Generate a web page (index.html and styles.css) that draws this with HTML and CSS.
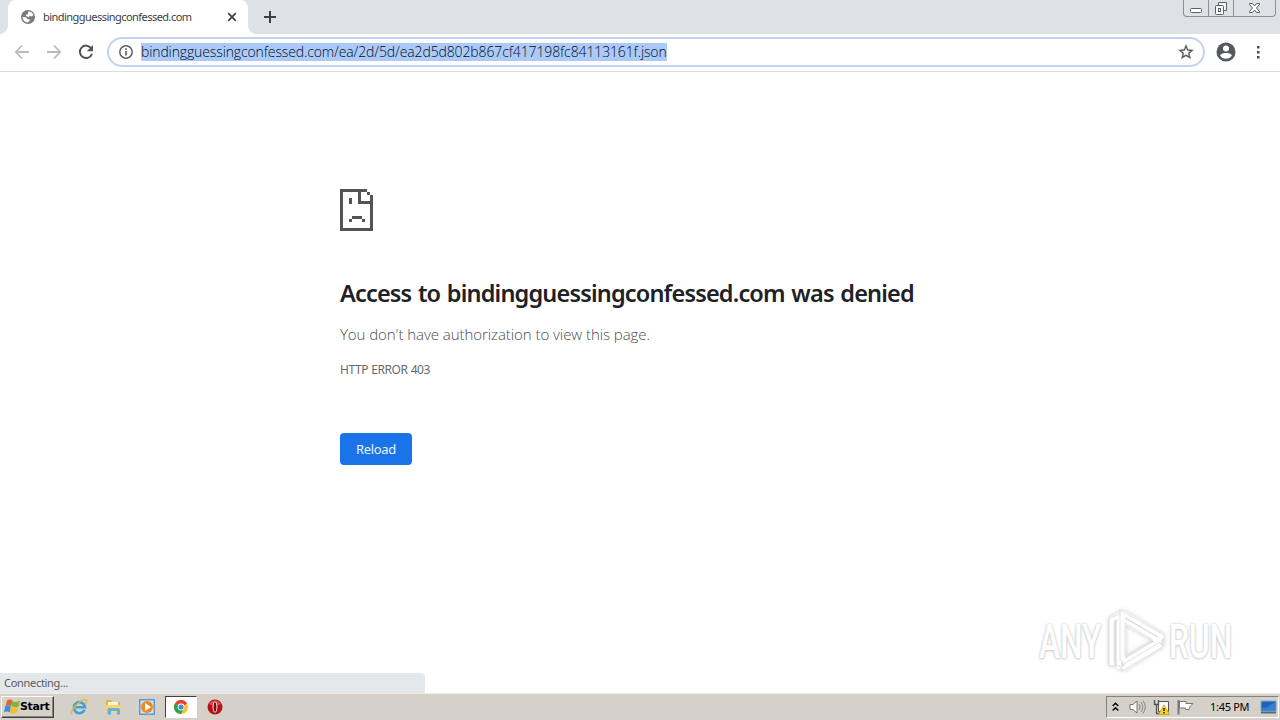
FILE: index.html
```html
<!DOCTYPE html>
<html lang="en">
<head>
    <meta charset="UTF-8">
    <meta name="viewport" content="width=device-width, initial-scale=1.0">
    <title>bindingguessingconfessed.com</title>
    <link rel="stylesheet" href="styles.css">
</head>
<body>
    <!-- Tabs and window buttons -->
    <header class="tab-strip">
        <div class="tab">
            <svg class="favicon" width="14" height="14" viewBox="0 0 14 14">
                <circle cx="7" cy="7" r="7" fill="#777a7e"/>
                <path d="M7.2 1.5 C9.5 1.2 12 3 12.4 5.3 L10.6 6.5 L8.6 5.8 L7.9 7.2 L5.4 6.2 L4.6 4.7 L6.8 4.2Z M1.5 7 L5 7.3 L6.4 9 L8.6 9.2 L8.8 10.4 L6.9 12.4 C4.2 12.5 1.5 10.2 1.5 7Z" fill="#fff"/>
            </svg>
            <span class="tab-title">bindingguessingconfessed.com</span>
            <svg class="tab-close" width="10" height="10" viewBox="0 0 10 10">
                <path d="M1.2 1.2L8.8 8.8M8.8 1.2L1.2 8.8" stroke="#3c4043" stroke-width="1.7"/>
            </svg>
        </div>
        <svg class="new-tab" width="12" height="12" viewBox="0 0 12 12">
            <path d="M6 0V12M0 6H12" stroke="#3c4043" stroke-width="2"/>
        </svg>
        <div class="window-buttons">
            <span><svg width="13" height="16" viewBox="0 0 13 16"><rect x=".5" y="8.5" width="11" height="4" rx="1" fill="#fff" stroke="#5b5f66"/></svg></span>
            <span><svg width="14" height="16" viewBox="0 0 14 16"><path d="M4.5 2.5H12.5V10.5H4.5Z" fill="#f4f5f7" stroke="#5b5f66"/><rect x="1.5" y="5.5" width="8" height="9" rx="1" fill="#fff" stroke="#5b5f66"/><rect x="4.5" y="8.5" width="2" height="3" fill="none" stroke="#5b5f66"/></svg></span>
            <span><svg width="13" height="16" viewBox="0 0 13 16"><path d="M1.5 3.500H4.500L6.500 6L8.500 3.500H11.500V4.500L8.500 8L11.500 11.500V12.500H8.500L6.500 10L4.500 12.500H1.500V11.500L4.500 8L1.500 4.500Z" fill="#fff" stroke="#5b5f66"/></svg></span>
        </div>
    </header>

    <!-- Address bar -->
    <nav class="toolbar">
        <svg class="nav-icon" width="16" height="16" viewBox="0 0 16 16">
            <path d="M15 8H2M8 1.500L1.800 8L8 14.500" fill="none" stroke="#babcbe" stroke-width="1.800"/>
        </svg>
        <svg class="nav-icon" width="16" height="16" viewBox="0 0 16 16">
            <path d="M1 8H14M8 1.500L14.200 8L8 14.500" fill="none" stroke="#babcbe" stroke-width="1.800"/>
        </svg>
        <svg class="nav-icon" width="16" height="16" viewBox="0 0 16 16">
            <path d="M13.200 4.300A6.200 6.200 0 1 0 14 9.700" fill="none" stroke="#505357" stroke-width="2"/>
            <path d="M15 1V7.200H8.800Z" fill="#505357"/>
        </svg>
        <div class="omnibox">
            <svg width="14" height="14" viewBox="0 0 14 14">
                <circle cx="7" cy="7" r="6.200" fill="none" stroke="#5f6368" stroke-width="1.500"/>
                <path d="M7 3.200V4.800M7 6.100V10.600" stroke="#5f6368" stroke-width="1.700"/>
            </svg>
            <span class="url">bindingguessingconfessed.com/ea/2d/5d/ea2d5d802b867cf417198fc84113161f.json</span>
            <svg class="star" width="18" height="18" viewBox="0 0 24 24">
                <path d="M22 9.240l-7.190-.62L12 2 9.190 8.630 2 9.240l5.460 4.730L5.820 21 12 17.270 18.180 21l-1.630-7.030L22 9.240zM12 15.400l-3.760 2.270 1-4.280-3.320-2.880 4.380-.38L12 6.100l1.710 4.040 4.380.38-3.320 2.880 1 4.280L12 15.400z" fill="#55585d" stroke="#55585d" stroke-width=".4"/>
            </svg>
        </div>
        <svg class="avatar" width="20" height="20" viewBox="0 0 20 20">
            <circle cx="10" cy="10" r="9.500" fill="#55585d"/>
            <circle cx="10" cy="6.500" r="3" fill="#fff"/>
            <path d="M4 13.500C5 11.500 8 11 10 11S15 11.500 16 13.500C14.800 15.500 12.500 16.800 10 16.800S5.200 15.500 4 13.500Z" fill="#fff"/>
        </svg>
        <svg class="menu-dots" width="4" height="14" viewBox="0 0 4 14">
            <path d="M1 1h2.500v2.500H1zM1 6h2.500v2.500H1zM1 11h2.500v2.500H1z" fill="#4a4d52"/>
        </svg>
    </nav>

    <!-- Error page -->
    <main class="page">
        <div class="error">
            <svg class="sad-page" width="33" height="42" viewBox="0 0 33 42" shape-rendering="crispEdges">
                <path d="M0 0H27V3H3V39H30V15H18V3H21V12H30V9H33V42H0ZM27 3H30V6H27ZM30 6H33V9H30ZM9 9H12V15H9ZM12 27H22V30H12ZM9 30H12V33H9ZM22 30H25V33H22Z" fill="#535353"/>
            </svg>
            <h1>Access to bindingguessingconfessed.com was denied</h1>
            <p class="message">You don't have authorization to view this page.</p>
            <p class="error-code">HTTP ERROR 403</p>
            <button>Reload</button>
        </div>
        <div class="status">Connecting...</div>
        <div class="watermark">
            <span class="any">ANY</span>
            <svg width="60" height="64" viewBox="0 0 60 64">
                <g fill="none" stroke="#fff" stroke-width="5" stroke-linejoin="round">
                    <path d="M6 56V10L13 6V60"/>
                    <path d="M17 51V4L56 27L51 31L18 12"/>
                    <path d="M17 54L55 31M17 60L55 36"/>
                </g>
                <path d="M3 57V9L14 5V1L58 26V37L16 62L13 56ZM19 14V47L47 31ZM8 54V13L12 11M14 5V52M19 9L52 28M16 56L56 32" fill="none" stroke="#e3e3e3"/>
            </svg>
            <span class="run">RUN</span>
        </div>
    </main>

    <!-- Windows taskbar -->
    <footer class="taskbar">
        <div class="start">
            <svg width="16" height="16" viewBox="0 0 16 16">
                <path d="M3 1.500Q6 -.5 8.500 1.500L7.300 7Q4 5 1.500 7Z" fill="#e8612c"/>
                <path d="M8.500 2Q12 4 16 1.500L14.500 7.500Q11 9 7.300 7Z" fill="#7bb53c"/>
                <path d="M1.300 7Q4 5.500 7 7L5.800 13.500Q3 11.500 0 13.500Z" fill="#3f8fd8"/>
                <path d="M7 7.500Q11 9.500 14.300 7.500L13 13.500Q9 15.500 5.800 13.500Z" fill="#f5bd29"/>
            </svg>
            <span>Start</span>
        </div>
        <div class="quick-launch">
            <span class="task">
                <svg width="18" height="18" viewBox="0 0 18 18">
                    <path d="M14.500 11.800A5.500 5.500 0 1 1 14.900 9.200H5.500" fill="none" stroke="#3ca2dd" stroke-width="2.600"/>
                    <path d="M2.500 15.500C-1 17.500 3 8 11 3C17 0 17.500 3 15.500 6" fill="none" stroke="#e9b92e" stroke-width="1.300"/>
                </svg>
            </span>
            <span class="task">
                <svg width="18" height="18" viewBox="0 0 18 18">
                    <path d="M2 2H7L8 4H16V13H2Z" fill="#dcb54a"/>
                    <path d="M4 4H14V8H4Z" fill="#fff8cf"/>
                    <path d="M1.500 7H16.500V14H1.500Z" fill="#f3d573"/>
                    <path d="M3.500 16.500V12Q3.500 10 5.500 10H14Q16 10 16 12V16.500H13V13H7V16.500Z" fill="#67afd9"/>
                </svg>
            </span>
            <span class="task">
                <svg width="18" height="18" viewBox="0 0 18 18">
                    <path d="M1 1H17V17H1Z" fill="#5c9bd0"/>
                    <path d="M2.500 2.500H15.500V15.500H2.500Z" fill="#cfe5f5"/>
                    <circle cx="9" cy="9" r="6" fill="#f1871e"/>
                    <path d="M7 5L13 9L7 13Z" fill="#fff"/>
                </svg>
            </span>
            <span class="task active">
                <svg width="14" height="14" viewBox="0 0 14 14">
                    <circle cx="7" cy="7" r="7" fill="#f5c32c"/>
                    <path d="M7 7L.9 3.500A7 7 0 0 1 13.100 3.500Z" fill="#df4436"/>
                    <path d="M7 7L.9 3.500A7 7 0 0 0 7 14L9.500 9Z" fill="#2ba24c"/>
                    <circle cx="7" cy="7" r="3.400" fill="#fff"/>
                    <circle cx="7" cy="7" r="2.600" fill="#4a86e0"/>
                </svg>
            </span>
            <span class="task">
                <svg width="16" height="16" viewBox="0 0 16 16">
                    <circle cx="8" cy="8" r="7.500" fill="#b51218"/>
                    <path d="M2 5A7 7 0 0 1 14 5Q8 8 2 5Z" fill="#d9494a"/>
                    <ellipse cx="8" cy="8" rx="2.400" ry="5.500" fill="#fff"/>
                    <ellipse cx="8" cy="8" rx="1.500" ry="4.800" fill="#7d0b10"/>
                </svg>
            </span>
        </div>
        <div class="tray">
            <svg class="chevrons" width="7" height="10" viewBox="0 0 7 10">
                <path d="M.7 4L3.500 1.200L6.300 4M.7 8.500L3.500 5.700L6.300 8.500" fill="none" stroke="#000" stroke-width="1.500"/>
            </svg>
            <svg class="sound" width="17" height="16" viewBox="0 0 17 16">
                <path d="M1 5.500H4L8 2V14L4 10.500H1Z" fill="#fff" stroke="#777"/>
                <path d="M10 5Q12 8 10 11M12 3Q15.500 8 12 13M14 1.500Q18.500 8 14 14.500" fill="none" stroke="#888"/>
            </svg>
            <svg class="network" width="17" height="16" viewBox="0 0 17 16">
                <path d="M5.500 2.500H15.500V12.500H5.500Z" fill="#f7f7f4" stroke="#555"/>
                <path d="M1.500 1V5.500H5.500V1M3.500 5.500V14.500H7" fill="none" stroke="#555" stroke-width="1.300"/>
                <path d="M11 6L16.500 15.500H5.500Z" fill="#ffd522" stroke="#b79716" stroke-width=".7"/>
                <path d="M11 9V12M11 13V14.500" stroke="#000" stroke-width="1.300"/>
            </svg>
            <svg class="flag" width="17" height="16" viewBox="0 0 17 16">
                <path d="M1.500 1V15.500" stroke="#777" stroke-width="2"/>
                <path d="M2.500 2.500H9V4.500H16L13 7.500L12 10.500H8.500V9H2.500Z" fill="#fff" stroke="#777"/>
            </svg>
            <span class="clock">1:45 PM</span>
            <svg class="desktop" width="17" height="14" viewBox="0 0 17 14">
                <path d="M1 1H16V11H1Z" fill="#1f62bb" stroke="#83a9cf"/>
                <path d="M2 8Q8 8 15 2V10H2Z" fill="#347fd2"/>
                <path d="M1 12.500H16" stroke="#4d6a8b" stroke-width="2"/>
            </svg>
        </div>
    </footer>
</body>
</html>
```
FILE: styles.css
```css
* {
    box-sizing: border-box;
}

body {
    margin: 0;
    width: 1280px;
    height: 720px;
    overflow: hidden;
    display: flex;
    flex-direction: column;
    font-family: "Noto Sans", "Open Sans", sans-serif;
    background-color: #fff;
    color: #202124;
}

svg {
    display: block;
    flex: none;
}

/* Tabs */
.tab-strip {
    height: 34px;
    flex: none;
    display: flex;
    align-items: flex-start;
    padding-left: 8px;
    background-color: #dee1e6;
}

.tab {
    position: relative;
    width: 240px;
    height: 34px;
    display: flex;
    align-items: center;
    padding: 0 11px 0 13px;
    border-radius: 8px 8px 0 0;
    background-color: #fff;
}

/* Curved feet of the tab */
.tab::before,
.tab::after {
    content: "";
    position: absolute;
    bottom: 0;
    width: 8px;
    height: 8px;
}

.tab::before {
    left: -8px;
    background: radial-gradient(circle at 0 0, #dee1e6 7.5px, #fff 8px);
}

.tab::after {
    right: -8px;
    background: radial-gradient(circle at 100% 0, #dee1e6 7.5px, #fff 8px);
}

.tab-title {
    flex: 1;
    margin-left: 8px;
    padding-bottom: 1px;
    font-size: 11px;
    letter-spacing: -0.54px;
    white-space: nowrap;
    color: #3c4043;
}

.new-tab {
    margin: 11px 0 0 16px;
}

.window-buttons {
    display: flex;
    width: 93px;
    height: 17px;
    margin: 0 4px 0 auto;
    border: 1px solid #8c9097;
    border-top: none;
    border-radius: 0 0 4px 4px;
}

.window-buttons span {
    width: 25px;
    display: flex;
    justify-content: center;
    border-right: 1px solid #8c9097;
}

.window-buttons span:last-child {
    flex: 1;
    border-right: none;
}

/* Toolbar */
.toolbar {
    height: 38px;
    flex: none;
    display: flex;
    align-items: center;
    padding: 0 20px 1px 14px;
    border-bottom: 1px solid #dadce0;
}

.nav-icon {
    margin-right: 16px;
}

.omnibox {
    width: 1098px;
    height: 30px;
    margin-left: -3px;
    display: flex;
    align-items: center;
    padding: 0 8px 0 10px;
    border: 2px solid #c1d3ee;
    border-radius: 15px;
}

.url {
    margin-left: 8px;
    font-family: "Open Sans", sans-serif;
    font-size: 14px;
    font-weight: 300;
    line-height: 18px;
    letter-spacing: -0.12px;
    white-space: nowrap;
    background-color: #accaf7;
    color: #000a1e;
}

.star {
    margin-left: auto;
}

.avatar {
    margin-left: 11px;
}

.menu-dots {
    margin-left: auto;
}

/* Error page */
.page {
    position: relative;
    height: 621px;
    flex: none;
}

.error {
    width: 600px;
    margin: 0 auto;
    padding-top: 117px;
}

h1 {
    margin: 45px 0 0;
    font-size: 23.5px;
    font-weight: 600;
    line-height: 34px;
    letter-spacing: -0.83px;
    word-spacing: 1.3px;
    white-space: nowrap;
}

.message {
    margin: 13px 0 0;
    font-family: "Open Sans", sans-serif;
    font-size: 15px;
    font-weight: 300;
    line-height: 22px;
    letter-spacing: -0.06px;
    color: #4a4d52;
}

.error-code {
    margin: 15px 0 0;
    font-size: 12px;
    line-height: 20px;
    letter-spacing: -0.45px;
    word-spacing: 0.6px;
    color: #66696e;
}

button {
    display: block;
    width: 72px;
    height: 32px;
    margin-top: 53px;
    padding: 0;
    border: none;
    border-radius: 4px;
    background-color: #1a73e8;
    color: #e8f3ff;
    font-family: "Noto Sans", sans-serif;
    font-size: 13px;
    letter-spacing: -0.3px;
}

.status {
    position: absolute;
    left: 0;
    bottom: 0;
    width: 425px;
    height: 20px;
    padding-left: 4px;
    border-top-right-radius: 4px;
    background-color: #e5e8eb;
    color: #55585d;
    font-size: 11px;
    line-height: 20px;
    letter-spacing: -0.3px;
}

.watermark {
    position: absolute;
    left: 1039px;
    top: 537px;
    display: flex;
    align-items: center;
    color: #fff;
    font-family: Roboto, sans-serif;
    font-size: 48px;
    font-weight: 500;
    line-height: 64px;
    text-shadow: 0 0 3px #c4c4c4, 0 1px 3px #d0d0d0;
}

.watermark svg {
    margin-left: -1px;
    filter: drop-shadow(0 0 2px #c8c8c8);
}

.watermark span {
    width: 64px;
    transform: translateY(1px) scaleX(0.66);
    transform-origin: left;
}

.watermark .any {
    margin-right: 4px;
}

.watermark .run {
    margin-left: 3px;
}

/* Taskbar */
.taskbar {
    height: 27px;
    flex: none;
    display: flex;
    align-items: center;
    padding: 0 0 1px 1px;
    border-top: 1px solid #eeece8;
    background-color: #d5d0c8;
}

.start {
    width: 53px;
    height: 22px;
    display: flex;
    align-items: center;
    padding-left: 2px;
    border: 1px solid;
    border-color: #fff #404040 #404040 #fff;
    box-shadow: inset -1px -1px #8a8780;
    color: #000;
    font-family: "DejaVu Sans", sans-serif;
    font-size: 11px;
    font-weight: bold;
    letter-spacing: -0.4px;
}

.quick-launch {
    display: flex;
    margin-left: 9px;
}

.task {
    width: 32px;
    height: 22px;
    margin-right: 2px;
    display: flex;
    align-items: center;
    justify-content: center;
}

.task.active {
    border: 1px solid;
    border-color: #404040 #fff #fff #404040;
    background-color: #fff;
}

.tray {
    width: 173px;
    height: 22px;
    margin: 0 1px 0 auto;
    display: flex;
    align-items: center;
    padding-left: 5px;
    border: 1px solid;
    border-color: #85827b #fff #fff #85827b;
}

.sound {
    margin-left: 10px;
}

.network {
    margin-left: 7px;
}

.flag {
    margin-left: 7px;
}

.clock {
    width: 42px;
    margin-left: 16px;
    color: #000;
    font-size: 11px;
    letter-spacing: -0.3px;
    white-space: nowrap;
}

.desktop {
    margin-left: 8px;
}
```
